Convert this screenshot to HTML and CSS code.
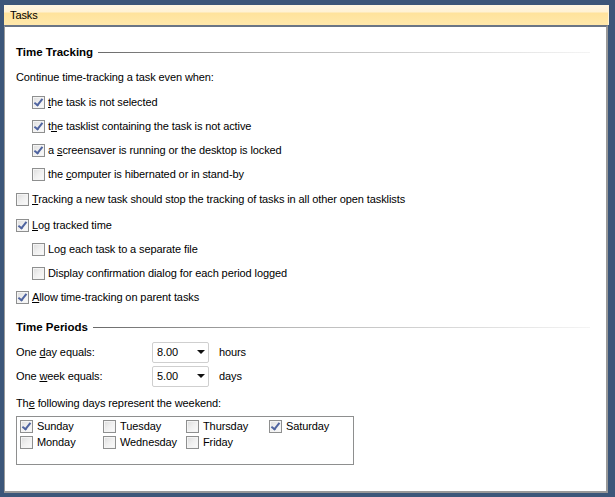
FILE: index.html
```html
<!DOCTYPE html>
<html>
<head>
<meta charset="utf-8">
<link rel="stylesheet" href="styles.css">
</head>
<body>
<div class="window">
  <div class="header">Tasks</div>
  <div class="panel">
    <div class="section"><span class="stitle">Time Tracking</span><span class="sline"></span></div>
    <div class="row m1"><span>Continue time-tracking a task even when:</span></div>
    <div class="row indent m1"><span class="cb on"></span><span><u>t</u>he task is not selected</span></div>
    <div class="row indent"><span class="cb on"></span><span>t<u>h</u>e tasklist containing the task is not active</span></div>
    <div class="row indent"><span class="cb on"></span><span>a <u>s</u>creensaver is running or the desktop is locked</span></div>
    <div class="row indent"><span class="cb"></span><span>the <u>c</u>omputer is hibernated or in stand-by</span></div>
    <div class="row m1"><span class="cb"></span><span><u>T</u>racking a new task should stop the tracking of tasks in all other open tasklists</span></div>
    <div class="row m2"><span class="cb on"></span><span><u>L</u>og tracked time</span></div>
    <div class="row indent"><span class="cb"></span><span>Lo<u>g</u> each task to a separate file</span></div>
    <div class="row indent"><span class="cb"></span><span>Display confirmation dialog for each period logged</span></div>
    <div class="row"><span class="cb on"></span><span><u>A</u>llow time-tracking on parent tasks</span></div>
    <div class="section m6"><span class="stitle">Time Periods</span><span class="sline"></span></div>
    <div class="row field m1">
      <span class="flabel">One <u>d</u>ay equals:</span>
      <span class="combo"><span class="cval">8.00</span><span class="arrow"></span></span>
      <span class="unit">hours</span>
    </div>
    <div class="row field">
      <span class="flabel">One <u>w</u>eek equals:</span>
      <span class="combo"><span class="cval">5.00</span><span class="arrow"></span></span>
      <span class="unit">days</span>
    </div>
    <div class="row m3"><span>Th<u>e</u> following days represent the weekend:</span></div>
    <div class="days">
      <div class="day"><span class="cb on"></span><span>Sunday</span></div>
      <div class="day"><span class="cb"></span><span>Tuesday</span></div>
      <div class="day"><span class="cb"></span><span>Thursday</span></div>
      <div class="day"><span class="cb on"></span><span>Saturday</span></div>
      <div class="day"><span class="cb"></span><span>Monday</span></div>
      <div class="day"><span class="cb"></span><span>Wednesday</span></div>
      <div class="day"><span class="cb"></span><span>Friday</span></div>
    </div>
  </div>
</div>
</body>
</html>
```
FILE: styles.css
```css
html, body {
  margin: 0;
  padding: 0;
  background: #3c5679;
  width: 615px;
  height: 497px;
  overflow: hidden;
}
body {
  font-family: "Liberation Sans", Arial, sans-serif;
  font-size: 11px;
  letter-spacing: -0.1px;
  color: #000;
}
.window {
  padding: 5px 0 0 4px;
  width: 605px;
}
.header {
  height: 20px;
  width: 605px;
  box-sizing: border-box;
  padding-left: 6px;
  line-height: 20px;
  background: linear-gradient(to bottom, #fff6e0 0, #fff2d4 7px, #ffe39c 8px, #ffe8ab 100%);
  border-right: 1px solid #fff3d8;
}
.panel {
  width: 604px;
  height: 468px;
  box-sizing: border-box;
  background: #fff;
  border-top: 2px solid #6a7586;
  border-left: 1px solid #9a9a9a;
  border-right: 2px solid #999;
  border-bottom: 2px solid #999;
  padding: 13px 0 0 11px;
  display: flex;
  flex-direction: column;
}
.section {
  height: 24px;
  display: flex;
  align-items: center;
  margin-right: 16px;
}
.stitle {
  font-weight: bold;
  font-size: 11.5px;
  letter-spacing: 0;
  margin-right: 5px;
}
.sline {
  flex: 1;
  height: 1px;
  background: linear-gradient(to right, #6a6a6a 0, #b8b8b8 40%, #f4f4f4 100%);
}
.row {
  height: 24px;
  display: flex;
  align-items: center;
  white-space: nowrap;
}
.m1 { margin-top: 1px; }
.m2 { margin-top: 2px; }
.m3 { margin-top: 3px; }
.m6 { margin-top: 6px; }
.row.indent { padding-left: 16px; }
.cb {
  flex: none;
  width: 13px;
  height: 13px;
  box-sizing: border-box;
  border: 1px solid #8e8f8f;
  background: linear-gradient(135deg, #dcdcdc 0, #f0f0f0 50%, #fbfbfb 100%);
  box-shadow: inset 0 0 0 1px #f4f4f4;
  margin-right: 3px;
  position: relative;
}
.cb.on::after {
  content: "";
  position: absolute;
  left: 3px;
  top: 0;
  width: 3px;
  height: 7px;
  border-right: 2px solid #4f64a0;
  border-bottom: 2px solid #4f64a0;
  transform: rotate(38deg);
}
.field .flabel {
  width: 136px;
}
.combo {
  width: 57px;
  height: 21px;
  box-sizing: border-box;
  border: 1px solid #cfcfcf;
  border-radius: 2px;
  display: flex;
  align-items: center;
  padding-left: 4px;
}
.cval { flex: 1; }
.arrow {
  width: 0;
  height: 0;
  border-left: 4px solid transparent;
  border-right: 4px solid transparent;
  border-top: 4px solid #111;
  margin-right: 3px;
}
.unit { margin-left: 10px; }
.days {
  margin-top: 1px;
  width: 338px;
  height: 49px;
  box-sizing: border-box;
  border: 1px solid #8e8f8f;
  padding: 1px 0 0 3px;
  display: grid;
  grid-template-columns: 83px 83px 83px 83px;
  grid-auto-rows: 16px;
}
.day {
  display: flex;
  align-items: center;
  white-space: nowrap;
}
.day .cb { margin-right: 4px; }
```
